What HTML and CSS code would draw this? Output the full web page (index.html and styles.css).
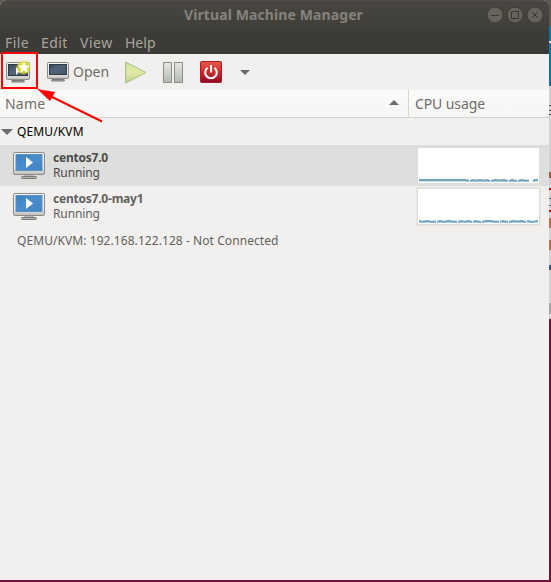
FILE: index.html
```html
<!DOCTYPE html>
<html lang="en">
<head>
<meta charset="utf-8">
<title>Virtual Machine Manager</title>
<link rel="stylesheet" href="styles.css">
</head>
<body>
<svg class="defs" width="0" height="0" aria-hidden="true">
  <defs>
    <linearGradient id="bezel" x2="0" y2="1"><stop stop-color="#f5f5f4"/><stop offset=".75" stop-color="#e6e5e3"/><stop offset="1" stop-color="#bdbcb9"/></linearGradient>
    <linearGradient id="dark" x2="1" y2="1"><stop stop-color="#3a495a"/><stop offset=".45" stop-color="#52647a"/><stop offset="1" stop-color="#435165"/></linearGradient>
    <linearGradient id="blue" x2="1" y2="1"><stop stop-color="#3b7fbd"/><stop offset=".5" stop-color="#4a8fcc"/><stop offset="1" stop-color="#3e82bf"/></linearGradient>
    <linearGradient id="bar" x2="0" y2="1"><stop stop-color="#e5e7e4"/><stop offset="1" stop-color="#b5bab4"/></linearGradient>
    <linearGradient id="red" x2="0" y2="1"><stop stop-color="#e65a4a"/><stop offset=".5" stop-color="#d22a2a"/><stop offset="1" stop-color="#8c0825"/></linearGradient>
    <linearGradient id="green" x2="0" y2="1"><stop stop-color="#cddf9c"/><stop offset=".5" stop-color="#e1eaa5"/><stop offset="1" stop-color="#bed18e"/></linearGradient>
    <radialGradient id="glow"><stop offset=".35" stop-color="#e9e72e"/><stop offset=".75" stop-color="#e0df32" stop-opacity=".85"/><stop offset="1" stop-color="#e0df32" stop-opacity="0"/></radialGradient>
    <symbol id="running" viewBox="0 0 32 28">
      <path d="M11 23h10v2H11z" fill="#bbb"/>
      <rect x="8.500" y="24.500" width="15" height="2" rx="1" fill="#b6b6b3" stroke="#777875"/>
      <rect x=".5" y=".5" width="31" height="22" rx="1.500" fill="url(#bezel)" stroke="#8b8b88"/>
      <rect x="3" y="2.500" width="26" height="16" fill="url(#blue)" stroke="#5b91c1"/>
      <path d="M13 5v11l7-5.500z" fill="#fff"/>
    </symbol>
  </defs>
</svg>
<div class="desktop">
  <main class="window">
    <header class="titlebar">
      <h1 class="title">Virtual Machine Manager</h1>
      <div class="controls">
        <svg width="56" height="16" viewBox="0 0 56 16">
          <g fill="#65635c" stroke="#34332f" stroke-width=".6"><circle cx="8" cy="8" r="7.800"/><circle cx="28" cy="8" r="7.800"/><circle cx="48" cy="8" r="7.800"/></g>
          <g fill="none" stroke="#383732"><path d="M4 8.500h8M24.500 4.500h7v7h-7zM45 5l6 6M51 5l-6 6"/></g>
        </svg>
      </div>
    </header>
    <nav class="menubar"><span class="file">File</span><span class="edit">Edit</span><span class="view">View</span><span class="help">Help</span></nav>
    <div class="toolbar">
      <svg class="new" width="25" height="24" viewBox="0 0 25 24">
        <path d="M8 19h8v2H8z" fill="#aaa"/><rect x="5.500" y="20.500" width="13" height="1.500" rx=".7" fill="#aaa" stroke="#777"/>
        <rect x=".5" y="2.500" width="23" height="17" rx="1" fill="url(#bezel)" stroke="#8b8b88"/>
        <rect x="2.500" y="4.500" width="19" height="11" fill="url(#dark)" stroke="#2f3a45"/>
        <path d="M10 7v8l4-4z" fill="#fff"/><circle cx="17.500" cy="7.500" r="7.500" fill="url(#glow)"/>
        <path d="M18 1.500l1.700 3.800 4.100.4-3.100 2.800.9 4.200-3.600-2.100-3.700 2.100.9-4.200-3.100-2.800 4.100-.4z" fill="#fffff2"/>
      </svg>
      <svg class="console" width="22" height="20" viewBox="0 0 22 20">
        <path d="M8 15h6v3H8z" fill="#aaa"/><rect x="4.500" y="17.500" width="13" height="1.500" rx=".7" fill="#aaa" stroke="#777"/>
        <rect x=".5" y=".5" width="21" height="16" rx="1" fill="url(#bezel)" stroke="#8b8b88"/>
        <rect x="2.500" y="2.500" width="17" height="10" fill="url(#dark)" stroke="#2f3a45"/>
      </svg>
      <span class="open">Open</span>
      <svg class="play" width="22" height="23" viewBox="0 0 22 23"><path d="M.6 1v21L21 11.500z" fill="url(#green)" stroke="#a3c084"/></svg>
      <svg class="pause" width="20" height="21" viewBox="0 0 20 21"><path d="M.5.5h8v20h-8zM11.500.5h8v20h-8z" fill="url(#bar)" stroke="#8a8e89"/></svg>
      <svg class="power" width="22" height="22" viewBox="0 0 22 22"><rect x=".5" y=".5" width="21" height="21" rx="1" fill="url(#red)" stroke="#a51c2b"/><path d="M7.600 6.700a5.800 5.800 0 1 0 6.800 0M11 4v7.500" fill="none" stroke="#fff" stroke-width="2"/></svg>
      <svg class="more" width="10" height="5" viewBox="0 0 10 5"><path d="M0 0h10L5 5z" fill="#6b6b69"/></svg>
    </div>
    <div class="columns">
      <div class="col-name"><span class="name">Name</span><svg width="10" height="5" viewBox="0 0 10 5"><path d="M0 5h10L5 0z" fill="#6b6b69"/></svg></div>
      <div class="col-cpu"><span class="cpu">CPU usage</span></div>
    </div>
    <section class="list">
      <div class="group"><svg width="12" height="6" viewBox="0 0 12 6"><path d="M0 0h12L6 6z" fill="#6b6b69"/></svg><span class="host">QEMU/KVM</span></div>
      <div class="vm selected">
        <svg class="icon" width="32" height="28"><use href="#running"/></svg>
        <div class="info"><b class="vm-a">centos7.0</b><span class="state">Running</span></div>
        <div class="graph"><svg width="121" height="35" viewBox="0 0 121 35"><path d="M1 33.500H51M52 33.500h20M73 33.500h17M91 33.500h8M100 33.500h11M115 33.500h5" stroke="#c5e0ea"/><path d="M1 32H48l3 1M52 33l3-1 3 .7 4-.7 4 .8 3-.8 3 1M73 33l4-1 4 .6 5-.6 4 1M91 33l3-1 5 1M100 33l4-1 3 .7 4-.2M115 33l2-1h3" fill="none" stroke="#73a6bb" stroke-width="2"/></svg></div>
      </div>
      <div class="vm">
        <svg class="icon" width="32" height="28"><use href="#running"/></svg>
        <div class="info"><b class="vm-b">centos7.0-may1</b><span class="state">Running</span></div>
        <div class="graph framed"><svg width="121" height="35" viewBox="0 0 121 35"><path d="M1 33.500h17M19 33.500h20M40 33.500h14M55 33.500h8M64 33.500h17M82 33.500h8M91 33.500h17M109 33.500h11" stroke="#c5e0ea"/><path d="M1 32l4 .8 4-.8 4 .7 5-.1M19 33l3-1 4 .7 5-.7 4 .7 4-.1M40 33l3-1 4 .7 4-.7 3 1M55 33l3-1 5 1M64 33l4-1h5l4 .7 4-.1M82 33l3-1 5 1M91 33l4-1 4 .6 5-.6 4 1M109 32l4 .8 4-.2 3-.6" fill="none" stroke="#73a6bb" stroke-width="2"/></svg></div>
      </div>
      <div class="remote"><span class="connection">QEMU/KVM: 192.168.122.128 - Not Connected</span></div>
    </section>
  </main>
  <div class="behind"></div>
  <svg class="annotation" width="110" height="130" viewBox="0 0 110 130"><rect x="2" y="53" width="35" height="35" fill="none" stroke="#f00" stroke-width="2"/><path d="M102 121.500L50 96" stroke="#f00" stroke-width="2"/><path d="M37 89l18 3-5 9z" fill="#f00"/></svg>
</div>
</body>
</html>
```
FILE: styles.css
```css
* { box-sizing: border-box; }
body { margin: 0; font: 14px/18px "Noto Sans", "Open Sans", sans-serif; color: #6f6d6a; }
svg { display: block; flex: none; }
span, b { white-space: nowrap; }
.defs { position: absolute; }
.desktop { position: relative; display: flex; width: 551px; height: 582px; background: linear-gradient(#59544a 26px, #770f3b 26px); overflow: hidden; }
.window { width: 549px; height: 580px; background: #f1f0ee; border-radius: 6px 6px 0 0; overflow: hidden; }
.titlebar { display: grid; height: 30px; background: linear-gradient(#484640, #403e39); border-top: 1px solid #4f4d46; }
.title { grid-area: 1 / 1; margin: 5px 0 0 184px; font-size: 14px; line-height: 18px; font-weight: 700; color: #85827b; letter-spacing: .1px; white-space: nowrap; }
.controls { grid-area: 1 / 1; justify-self: end; padding: 6px 6px 0 0; }
.menubar { display: flex; gap: 12px; height: 24px; padding: 4px 5px 0; background: #3c3b37; color: #aaa69e; }
.menubar span { flex: none; }
.file { width: 24px; letter-spacing: .4px; }
.edit { width: 27px; letter-spacing: .4px; }
.view { width: 33px; letter-spacing: .5px; }
.help { width: 31px; }
.toolbar { display: flex; align-items: center; height: 36px; padding-left: 6px; }
.new { margin-top: -1px; }
.console { margin-left: 16px; }
.open { width: 36px; margin-left: 4px; }
.play { margin-left: 16px; }
.pause { margin-left: 16px; }
.power { margin-left: 17px; }
.more { margin-left: 18px; }
.columns { display: flex; height: 28px; border-bottom: 1px solid #d5d3d1; background: linear-gradient(#fbfbfa, #f5f5f4); line-height: 27px; }
.col-name { display: flex; align-items: center; justify-content: space-between; width: 409px; padding: 0 9px 0 5px; border-right: 1px solid #d8d6d3; }
.col-name svg { margin-top: -2px; }
.name { letter-spacing: .2px; }
.col-cpu { padding-left: 6px; letter-spacing: -.1px; }
.list { font-size: 12px; line-height: 15px; color: #62605d; }
.group { display: flex; align-items: center; gap: 4px; height: 27px; padding-left: 1px; color: #000; letter-spacing: .12px; }
.vm { display: flex; height: 41px; }
.vm-a { letter-spacing: -.22px; }
.vm-b { letter-spacing: -.22px; }
.selected { background: #dededc; color: #4b4a48; }
.icon { margin: 7px 8px 0 13px; }
.info { display: flex; flex-direction: column; align-items: flex-start; width: 365px; padding-top: 5px; }
.state { letter-spacing: -.1px; }
.graph { width: 121px; height: 35px; margin-top: 3px; background: #fff; }
.framed { box-shadow: 0 0 0 1px #dfdcda, 0 0 0 2px #e8e6e3; }
.remote { padding: 6px 0 0 17px; letter-spacing: .07px; }
.behind { width: 2px; height: 582px; background: linear-gradient(#59544a 26px, #0874ad 26px 41px, #d5e5eb 41px 43px, #0874ad 43px 86px, #d4d2d0 86px 105px, #444 105px 106px, #d4d2d0 106px 110px, #444 110px 111px, #d4d2d0 111px 114px, #444 114px 115px, #d4d2d0 115px 172px, #9d5641 172px 178px, #d4d2d0 178px 188px, #e00 188px 190px, #d4d2d0 190px 198px, #345d82 198px 199px, #d4d2d0 199px 205px, #345d82 205px 206px, #d4d2d0 206px 210px, #e00 210px 212px, #d4d2d0 212px 218px, #b87048 218px 228px, #d4d2d0 228px 240px, #b87048 240px 250px, #d4d2d0 250px 265px, #315985 265px 270px, #d4d2d0 270px 303px, #a6a4a4 303px 314px, #d4d2d0 314px 319px, #770f3b 319px); }
.annotation { position: absolute; left: 0; top: 0; }
```
